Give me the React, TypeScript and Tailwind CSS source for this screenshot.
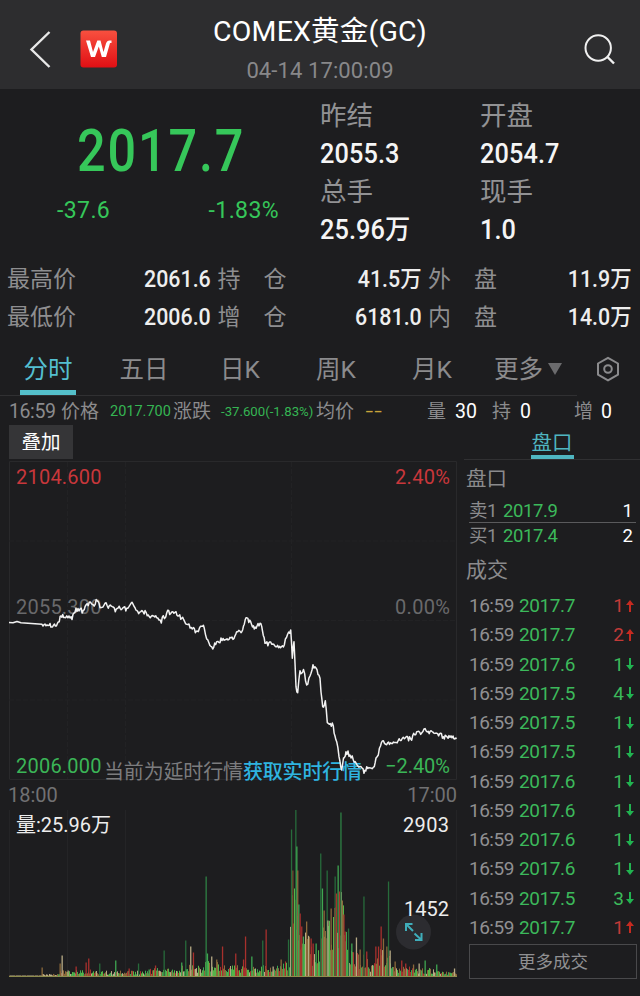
import { clsx } from "clsx";

const FONT = "font-[Roboto,'Noto_Sans_CJK_SC',sans-serif]";

const quotes = [
  { label: "昨结", value: "2055.3" },
  { label: "开盘", value: "2054.7" },
  { label: "总手", value: "25.96万" },
  { label: "现手", value: "1.0" },
];

const stats = [
  [["最高价", "2061.6"], ["持仓", "41.5万"], ["外盘", "11.9万"]],
  [["最低价", "2006.0"], ["增仓", "6181.0"], ["内盘", "14.0万"]],
];

const tabs = ["分时", "五日", "日K", "周K", "月K"];

const trades: [string, number, boolean][] = [
  ["2017.7", 1, true],
  ["2017.7", 2, true],
  ["2017.6", 1, false],
  ["2017.5", 4, false],
  ["2017.5", 1, false],
  ["2017.5", 1, false],
  ["2017.6", 1, false],
  ["2017.6", 1, false],
  ["2017.6", 1, false],
  ["2017.6", 1, false],
  ["2017.5", 3, false],
  ["2017.7", 1, true],
];

// minute line, x/y in chart pixels
const pricePoints: [number, number][] = [
  [9, 622.5], [13, 622.8], [17, 621.5], [21, 622.7], [42, 624.3], [43, 626], [45, 624], [48, 625.5], [50, 623.5], [52.5, 627], [54.5, 624],
  [57.3, 623.7], [59.3, 621.7], [61, 616], [62.7, 614.5], [65.7, 617.7], [69, 616], [72, 619.5], [74, 613], [76, 608.3], [79, 611],
  [83.3, 610.3], [86, 605], [89.3, 602.3], [93, 604.5], [97.3, 601], [100, 607.7], [103, 607], [105, 603.3],
  [108.3, 608.3], [112.3, 606.7], [115.3, 611.7], [117.3, 608.3], [122, 609], [126.7, 608.3], [131, 603.3],
  [135, 607.7], [138.7, 613.7], [143, 611.7], [148.3, 615], [153, 616], [156.7, 617.7], [159, 620], [161.3, 623], [163.3, 615.7],
  [165.7, 617], [167.7, 610.3], [170.7, 613.5], [175, 612.3], [178, 616], [181.7, 618.3], [186.7, 624.3], [189, 624], [192.3, 629],
  [198.3, 631.7], [201.7, 626.3], [204.3, 628.3], [206.7, 639], [209, 643], [212.7, 649], [216.7, 641.7], [219, 642.5], [223, 638.5],
  [228, 640], [234, 638.5], [236.7, 631.7], [241, 632.7], [243.5, 626], [246, 617.7], [250.7, 621.7], [254.3, 629], [257, 626], [260, 623.3],
  [262.5, 631], [265, 643.3], [271.7, 644.3], [276.7, 646.7], [284.3, 645], [287.7, 634], [290.7, 630], [292.3, 658.3],
  [294, 641.7], [295, 663], [296, 686.7], [297.7, 692.7], [300, 670.7], [302, 673], [303.5, 669.5], [306.7, 685], [310, 676],
  [313, 664.7], [316, 668], [320, 678.3], [321, 692], [322.7, 706.7], [325.3, 700.7], [327.3, 722.7], [333.3, 726],
  [335, 736], [336.7, 741.7], [339, 756.7], [341.7, 770], [343.5, 758], [346, 751.7], [350, 755], [353.3, 760], [356, 763], [360, 766.7],
  [362, 768], [364, 773.3], [366.7, 766.7], [370, 768], [374.3, 766.7], [376, 758], [378.3, 755], [380.5, 746], [382.3, 741], [386.7, 744.7],
  [393.3, 742], [398, 741], [403.3, 737.3], [410.7, 739], [416.7, 731.7], [421.7, 733], [424, 729], [427.3, 732], [432, 731.5],
  [436.7, 733.3], [443.3, 736.7], [450, 737.3], [453, 736], [456.7, 738.7],
];

const GREEN = "#3fa651";
const BRIGHT = "#55b548";
const RED = "#a8302d";
const OLIVE = "#8b693a";
const TAN = "#b7ab86";
const DARK = "#276b3b";

// [x, height, colour] of the bars that stand out
const spikes: [number, number, string][] = [
  [42, 9, OLIVE], [60, 13, OLIVE], [62, 21, TAN], [68, 6, TAN], [76, 10, RED], [86, 14, RED], [88.6, 18, RED], [99.6, 13, DARK],
  [115.6, 16, GREEN], [129, 8, RED], [138.4, 13, DARK], [149, 7, GREEN], [155.4, 11, RED], [164, 26, DARK],
  [181.6, 14, GREEN], [185.6, 36, DARK], [190.6, 30, TAN], [193.3, 24, RED], [206, 100, "#2e8144"], [207.3, 23, GREEN],
  [211.6, 20, TAN], [216.6, 17, OLIVE], [222.4, 30, RED], [235.6, 23, RED], [243.4, 17, RED], [245.4, 40, RED],
  [251.7, 20, GREEN], [262.6, 36, DARK], [266, 47, RED], [273, 10, TAN], [281, 17, OLIVE], [288.4, 37, DARK],
  [291.4, 147, DARK], [292.7, 106, "#71502f"], [295.7, 167, DARK], [296.7, 130, GREEN], [297.6, 106, OLIVE], [298.7, 72, GREEN],
  [300, 63, RED], [301.6, 50, RED], [303.3, 40, GREEN], [306.5, 55, OLIVE], [311, 38, RED], [313, 33, RED],
  [316, 33, GREEN], [320.6, 123, DARK], [322.3, 88, GREEN], [324, 66, OLIVE], [327, 106, DARK], [327.8, 56, TAN],
  [331, 68, OLIVE], [335, 100, DARK], [336.3, 83, RED], [338, 111, GREEN], [339.4, 85, RED], [340.8, 164, "#2e8144"],
  [342.2, 76, OLIVE], [343.8, 62, RED], [345, 45, RED], [348.4, 48, DARK], [351.7, 33, GREEN], [356.3, 39, TAN], [360, 27, OLIVE],
  [363.8, 80, DARK], [366.6, 25, RED], [375.7, 30, RED], [378.4, 30, RED], [381, 50, RED], [383.3, 38, OLIVE],
  [386.7, 30, OLIVE], [388.4, 95, DARK], [390, 26, TAN], [395, 15, OLIVE], [401.6, 16, RED], [405.6, 13, RED],
  [413.4, 12, OLIVE], [419, 13, TAN], [425, 16, GREEN], [436.6, 12, GREEN], [454.4, 8, TAN],
];

// [x from, average height]
const envelope: [number, number][] = [
  [9, 0.8], [42, 2], [58, 5], [72, 5.5], [92, 4.5], [150, 6.5], [180, 9], [204, 12], [220, 9], [280, 12],
  [290, 68], [299, 34], [312, 22], [320, 46], [333, 68], [344, 38], [349, 24], [358, 17], [368, 11], [377, 22], [384, 17],
  [393, 8], [410, 6.5], [440, 4],
];

let seed = 41;
function rand() {
  seed = (seed * 16807) % 2147483647;
  return seed / 2147483647;
}

const noise: [number, number, string][] = [];
for (let x = 9.5; x < 457; x += 1) {
  const base = envelope.filter(([from]) => from <= x).pop()![1];
  const palette = x < 58 ? [TAN, OLIVE, TAN] : [GREEN, BRIGHT, RED, OLIVE, OLIVE, BRIGHT, TAN];
  noise.push([x, Math.max(1, base * (0.4 + rand() * 0.9)), palette[Math.floor(rand() * palette.length)]]);
}

// fine wiggle between the main points
const linePath = pricePoints
  .map(([x, y], i) => {
    if (i === 0) return `M${x} ${y}`;
    const [px, py] = pricePoints[i - 1];
    const steps = x < 43 ? 1 : Math.max(1, Math.round((x - px) / 1));
    let d = "";
    for (let s = 1; s < steps; s++) {
      const t = s / steps;
      d += `L${(px + (x - px) * t).toFixed(1)} ${(py + (y - py) * t + (rand() - 0.5) * 5).toFixed(1)}`;
    }
    return `${d}L${x} ${y}`;
  })
  .join("");

function Header() {
  return (
    <header className="flex h-[89px] items-center bg-[#2d2d2f] text-white">
      <svg className="ml-7 mt-2 h-10 w-6" viewBox="0 0 24 40" fill="none" stroke="#e8e8e8" strokeWidth="2.4">
        <path d="M21.5 3L3.5 20.5L21.5 38" />
      </svg>
      <svg className="ml-7 mt-2 size-9.5" viewBox="0 0 38 38">
        <defs>
          <linearGradient id="logo" x1="0" y1="0" x2="0" y2="1">
            <stop offset="0" stopColor="#f8503f" />
            <stop offset="1" stopColor="#e00f14" />
          </linearGradient>
        </defs>
        <rect x="0.500" y="0.500" width="36.500" height="37" rx="3" fill="url(#logo)" />
        <path d="M6 10.500H10L13 22L17.300 10.500H20.500L23.500 22L26 13.500Q27 10.500 29.500 10.500H31.500V13H30L26 27H21.800L18.800 16.500L15 27H11Z" fill="#fff" />
      </svg>
      <div className="flex w-[404px] flex-col items-center">
        <h1 className="mt-[9px] h-9 text-[28.5px] leading-9 tracking-[0.2px] whitespace-nowrap">COMEX黄金(GC)</h1>
        <p className="mt-0.5 h-8 text-[22px] leading-[38px] tracking-[0.1px] text-[#88888a]">04-14 17:00:09</p>
      </div>
      <svg className="mt-2 ml-[62px] size-8" viewBox="0 0 32 32" fill="none" stroke="#f0f0f0" strokeWidth="2">
        <circle cx="14.200" cy="15" r="12.700" />
        <path d="M23.500 24L30 30.500" strokeWidth="2.400" />
      </svg>
    </header>
  );
}

function Summary() {
  return (
    <section className="flex h-[171px]">
      <div className="w-80 text-[#36c75a]">
        <p className="mt-8 ml-[77px] h-[60px] origin-left scale-x-[0.86] text-[58.5px] leading-[60px] font-medium tracking-[2.2px]">2017.7</p>
        <div className="mt-[15px] flex justify-between pr-[41px] pl-[57px] text-[23px] leading-[30px]">
          <span className="tracking-[0.4px]">-37.6</span>
          <span className="tracking-[0.4px]">-1.83%</span>
        </div>
      </div>
      <div className="mt-2 grid h-[151px] w-80 grid-cols-2">
        {quotes.map((q) => (
          <div key={q.label}>
            <p className="h-[37px] text-[26.5px] leading-[37px] text-[#929294]">{q.label}</p>
            <p className="h-[38px] origin-left scale-x-[0.92] text-[27.5px] leading-[39px] font-medium tracking-[0.1px] text-[#f5f5f5]">{q.value}</p>
          </div>
        ))}
      </div>
    </section>
  );
}

function Stats() {
  return (
    <section className="flex h-[76px] flex-col pt-px pr-2 pl-[7px]">
      {stats.map((row) => (
        <div key={row[0][0]} className="grid h-[38px] grid-cols-[204px_204px_204px] items-center justify-between text-[23px] leading-[38px]">
          {row.map(([label, value]) => (
            <div key={label} className="flex justify-between">
              <span className={clsx("text-[#8e8e90]", label.length === 2 && "flex gap-[23px]")}>
                {label.length === 2 ? [...label].map((c) => <span key={c}>{c}</span>) : label}
              </span>
              <span className="origin-right scale-x-[0.93] font-medium text-[#eeeeee]">{value}</span>
            </div>
          ))}
        </div>
      ))}
    </section>
  );
}

function PeriodTabs() {
  return (
    <nav className="flex h-[60px] text-[24.5px] text-[#8b8b8d]">
      {tabs.map((t, i) => (
        <button key={t} className={clsx("flex h-[60px] w-24 flex-col items-center", i === 0 && "text-[#54bfd0]")}>
          <span className="mt-3.5 h-10 leading-10">{t}</span>
          {i === 0 && <span className="h-[5px] w-14 bg-[#54bfca]" />}
        </button>
      ))}
      <button className="flex h-[60px] items-start gap-[5px] pl-3.5">
        <span className="mt-3.5 leading-10">更多</span>
        <svg className="mt-[27px] h-3 w-3.5" viewBox="0 0 14 12" fill="#6b6b6d">
          <path d="M0 0H14L7 12Z" />
        </svg>
      </button>
      <svg className="mt-5 ml-[34px] h-[27px] w-6" viewBox="0 0 24 27" fill="none" stroke="#8b8b8d" strokeWidth="2">
        <path d="M12 1.800L22 7.500V18.700L12 24.400L2 18.700V7.500Z" strokeLinejoin="round" />
        <circle cx="12" cy="13" r="3.800" />
      </svg>
    </nav>
  );
}

function TickInfo() {
  return (
    <div className="flex h-[29px] pl-[9px] text-[19px] leading-8 whitespace-nowrap text-[#8b8b8d]">
      <span className="w-[52px] text-[19.5px] tracking-[-0.4px]">16:59</span>
      <span className="w-[49px]">价格</span>
      <span className="w-[63px] text-[14.5px] text-[#35b553]">2017.700</span>
      <span className="w-[48px]">涨跌</span>
      <span className="w-[95px] text-[13.2px] text-[#35b553]">-37.600(-1.83%)</span>
      <span className="w-[49px]">均价</span>
      <span className="w-[62px] origin-left scale-x-[0.7] text-[#c9a43a]">––</span>
      <span className="w-7">量</span>
      <span className="w-[37px] text-[19.5px] text-white">30</span>
      <span className="w-7">持</span>
      <span className="w-[54px] text-[19.5px] text-white">0</span>
      <span className="w-[27px]">增</span>
      <span className="text-[19.5px] text-white">0</span>
    </div>
  );
}

function PriceChart() {
  return (
    <svg className="block h-[320px] w-[458px] overflow-visible" viewBox="0 460 458 320" fontSize="20">
      <g stroke="#29292b" fill="none">
        <path d="M9.500 779V461.500H456.500V779.500H9.500" />
        <path d="M9 541H457M9 620.500H457M9 700H457M67.500 462V779M125.500 462V779M291.500 462V779" stroke="#222224" strokeDasharray="5 2" />
      </g>
      <text x="16" y="483.500" fill="#c8373b" textLength="85.500">2104.600</text>
      <text x="395" y="483.500" fill="#c8373b" textLength="55">2.40%</text>
      <text x="16" y="613.500" fill="#69696b" textLength="85.500">2055.300</text>
      <text x="395" y="613.500" fill="#69696b" textLength="55">0.00%</text>
      <text x="16" y="773" fill="#3bb557" textLength="85.500">2006.000</text>
      <text x="385" y="773" fill="#3bb557" textLength="65">−2.40%</text>
      <text x="104" y="778.500" fill="#7c7c7e" textLength="139">当前为延时行情</text>
      <text x="243" y="778.500" fill="#2fb4e0" fontWeight="500" textLength="119">获取实时行情</text>
      <path d={linePath} fill="none" stroke="#f2f2f2" strokeWidth="1.500" strokeLinejoin="round" />
    </svg>
  );
}

function VolumeChart() {
  return (
    <svg className="block h-[186px] w-[458px]" viewBox="0 810 458 186" fontSize="20" fill="#ededed">
      <path d="M9.500 810V977M456.500 810V977M67.500 810V976M125.500 810V976" stroke="#242426" />
      {noise.map(([x, h, c]) => (
        <rect key={x} x={x - 0.5} y={976.5 - h} width="1" height={h} fill={c} />
      ))}
      {spikes.map(([x, h, c]) => (
        <rect key={`s${x}`} x={x - 0.5} y={976.5 - h} width="1.300" height={h} fill={c} />
      ))}
      <path d="M9 976.500H457" stroke="#8e8d4e" />
      <text x="16" y="832" textLength="95">量:25.96万</text>
      <text x="403" y="832" textLength="46">2903</text>
      <circle cx="413.500" cy="932" r="17.500" fill="#2c2c30" />
      <text x="404" y="916" textLength="45">1452</text>
      <path d="M413 931L406.500 924.500M406 931V924H412.500M414.500 933.500L421 939.500M421.500 933V940H415" stroke="#3fadba" strokeWidth="2" fill="none" />
    </svg>
  );
}

function Arrow({ up }: { up: boolean }) {
  return (
    <svg className="h-3.5 w-2" viewBox="0 0 8 14">
      <path
        d={up ? "M4 1L8 6H5V13H3V6H0Z" : "M4 13L8 8H5V1H3V8H0Z"}
        fill={up ? "#c62a20" : "#21b350"}
      />
    </svg>
  );
}

function OrderBook() {
  return (
    <aside className="flex w-[176px] flex-col">
      <div className="flex h-[35px] justify-center border-b border-[#303032]">
        <span className="h-[34px] w-[43px] border-b-4 border-[#4fb5c0] text-center text-[20.5px] leading-[36px] text-[#4fb5c0]">盘口</span>
      </div>
      <h2 className="mt-[3px] h-8 pl-0.5 text-[20.5px] leading-[33px] text-[#8b8b8d]">盘口</h2>
      <div className="mt-[3px] mr-1 ml-[5px] text-[18.5px] text-[#8b8b8d]">
        <div className="flex h-[25px] border-b border-[#5a5a5c] pr-[3px] leading-[27px]">
          <span className="w-[34px] tracking-[-0.5px]">卖1</span>
          <span className="flex-1 tracking-[-0.4px] text-[#3cb95b]">2017.9</span>
          <span className="text-white">1</span>
        </div>
        <div className="flex h-[26px] pr-[3px] leading-[26px]">
          <span className="w-[34px] tracking-[-0.5px]">买1</span>
          <span className="flex-1 tracking-[-0.4px] text-[#3cb95b]">2017.4</span>
          <span className="text-white">2</span>
        </div>
      </div>
      <h2 className="mt-[3px] h-9 pl-0.5 text-[21px] leading-9 text-[#8b8b8d]">成交</h2>
      <ul className="mt-[3px] pr-[6px] pl-[5px] text-[19px] leading-[29px]">
        {trades.map(([price, count, up], i) => (
          <li key={i} className="flex h-[29.25px] items-center">
            <span className="w-[50px] tracking-[-0.5px] text-[#909092]">16:59</span>
            <span className="flex-1 tracking-[-0.4px] text-[#3cb95b]">{price}</span>
            <span className={clsx("mr-[2px]", up ? "text-[#c33a38]" : "text-[#3cb95b]")}>{count}</span>
            <Arrow up={up} />
          </li>
        ))}
      </ul>
      <button className="mt-[2px] mr-[3px] ml-[5px] h-[35px] border border-[#49494b] text-[17.5px] leading-[34px] text-[#909092]">更多成交</button>
    </aside>
  );
}

export default function App() {
  return (
    <main className={clsx("h-[996px] w-[640px] overflow-hidden bg-[#1d1d1f]", FONT)}>
      <Header />
      <Summary />
      <Stats />
      <PeriodTabs />
      <div className="-mt-px h-px w-[577px] bg-[#303032]" />
      <TickInfo />
      <div className="flex">
        <div className="w-[464px]">
          <div className="h-[35px] pl-[9px]">
            <button className="h-[34px] w-16 bg-[#353537] text-[19.5px] leading-9 text-white">叠加</button>
          </div>
          <PriceChart />
          <div className="flex h-[30px] w-[457px] justify-between pl-2 text-[20px] leading-[31px] text-[#717173]">
            <span>18:00</span>
            <span>17:00</span>
          </div>
          <VolumeChart />
        </div>
        <OrderBook />
      </div>
    </main>
  );
}
